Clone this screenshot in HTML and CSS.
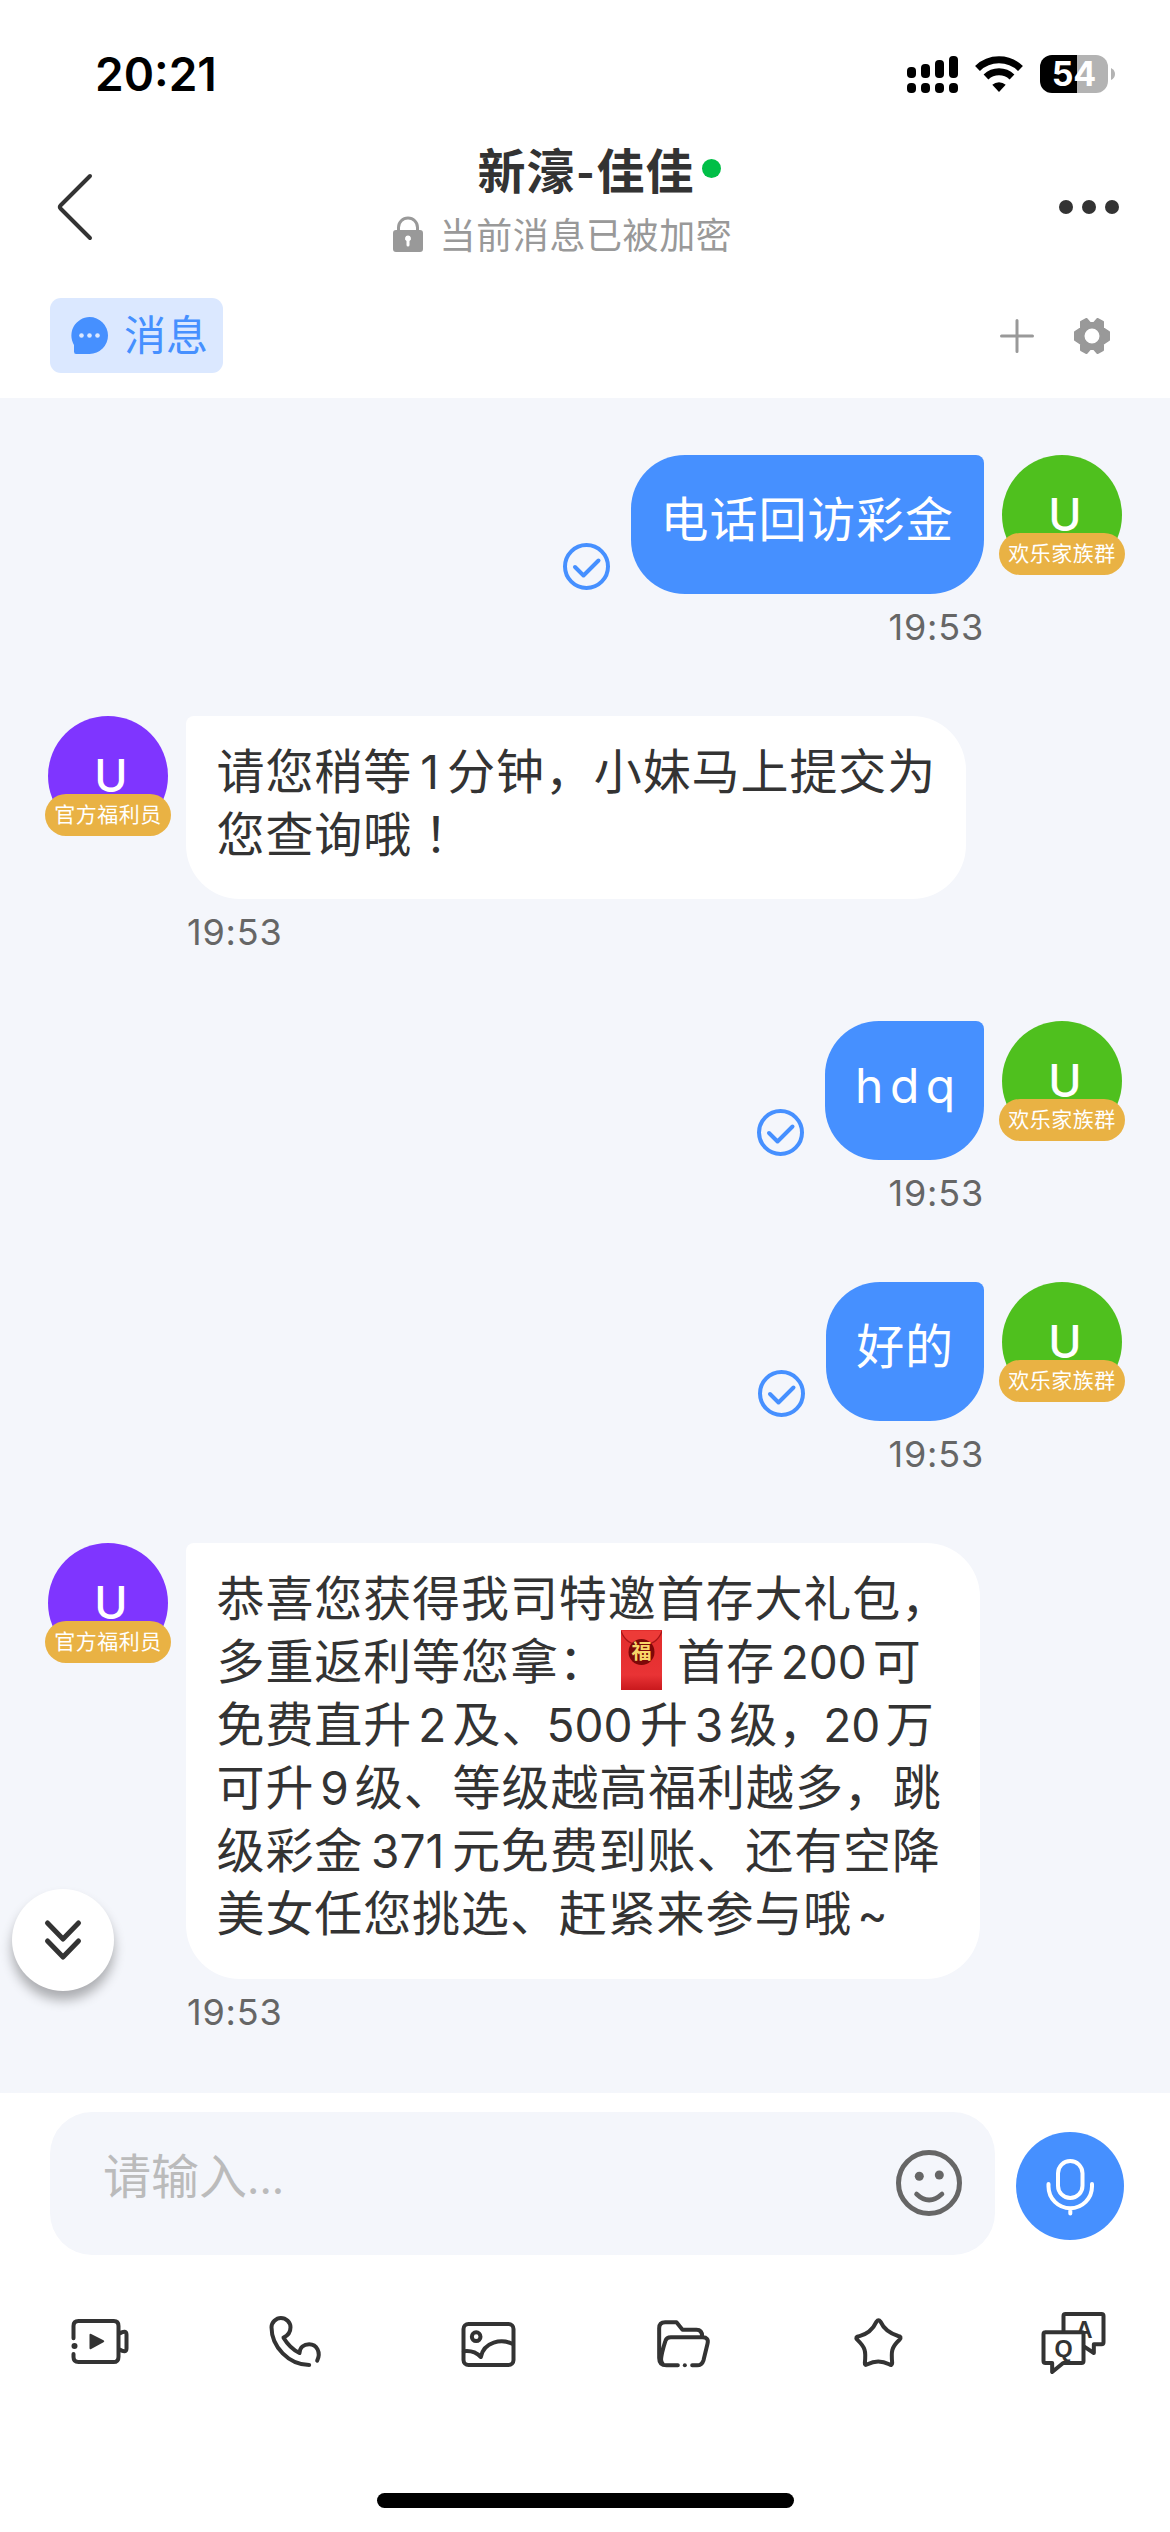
FILE: index.html
```html
<!DOCTYPE html>
<html lang="zh-CN">
<head>
<meta charset="utf-8">
<title>新濠-佳佳</title>
<link rel="stylesheet" href="styles.css">
</head>
<body>
<div class="app">
  <header class="header">
    <div class="status">
      <span class="clock">20:21</span>
      <div class="indicators">
        <svg class="signal" viewBox="0 0 51 37" width="51" height="37">
          <rect x="0" y="11" width="9" height="11" rx="4"/><rect x="14" y="8" width="9" height="14" rx="4"/><rect x="28" y="4" width="9" height="18" rx="4"/><rect x="42" y="0" width="9" height="22" rx="4"/>
          <rect x="0" y="27" width="9" height="10" rx="4"/><rect x="14" y="27" width="9" height="10" rx="4"/><rect x="28" y="27" width="9" height="10" rx="4"/><rect x="42" y="27" width="9" height="10" rx="4"/>
        </svg>
        <svg class="wifi" viewBox="0 0 48 37" width="48" height="37">
          <path d="M2.5 12.5A31 31 0 0 1 45.5 12.5" fill="none" stroke="#000" stroke-width="7"/>
          <path d="M11 21A19 19 0 0 1 37 21" fill="none" stroke="#000" stroke-width="7"/>
          <path d="M17.3 28.8A10 10 0 0 1 30.7 28.8L24 36Z"/>
        </svg>
        <div class="battery">54</div>
        <svg class="nub" viewBox="0 0 4 12" width="4" height="12"><path d="M0 0Q4 2 4 6Q4 10 0 12Z" fill="#b3b3b3"/></svg>
      </div>
    </div>
    <div class="nav">
      <svg class="back" viewBox="0 0 38 68" width="38" height="68"><path d="M34 3L4.500 32.500Q3 34 4.500 35.500L34 65" fill="none" stroke="#333" stroke-width="4" stroke-linecap="round"/></svg>
      <div class="heading">
        <div class="title">新濠<span class="hyphen">-</span>佳佳<i class="online"></i></div>
        <div class="secure">
          <svg viewBox="0 0 30 36" width="30" height="36"><path d="M5.500 16V11.500a9.500 9.500 0 0 1 19 0V16" fill="none" stroke="#999" stroke-width="3"/><path fill="#999" fill-rule="evenodd" d="M3 14H27a3 3 0 0 1 3 3V33a3 3 0 0 1-3 3H3a3 3 0 0 1-3-3V17a3 3 0 0 1 3-3ZM15 19.500a3 3 0 0 0-1.500 5.600V29a1.500 1.500 0 0 0 3 0V25.100A3 3 0 0 0 15 19.500Z"/></svg>
          <span>当前消息已被加密</span>
        </div>
      </div>
      <svg class="more" viewBox="0 0 60 14" width="60" height="14" fill="#333"><circle cx="7" cy="7" r="7"/><circle cx="30" cy="7" r="7"/><circle cx="53" cy="7" r="7"/></svg>
    </div>
    <div class="tabs">
      <div class="tab">
        <svg viewBox="0 0 37 37" width="37" height="37"><path d="M18.500 0A18.500 18.500 0 1 1 18.500 37H5Q3 37 3 34.500V28A18.500 18.500 0 0 1 18.500 0Z" fill="#4690ff"/><g fill="#dbe8ff"><circle cx="10.500" cy="18.500" r="2.300"/><circle cx="18.500" cy="18.500" r="2.300"/><circle cx="26.500" cy="18.500" r="2.300"/></g></svg>
        <span>消息</span>
      </div>
      <div class="tab-actions">
        <svg viewBox="0 0 34 34" width="34" height="34"><path d="M17 1.500V32.500M1.500 17H32.500" stroke="#999" stroke-width="3" stroke-linecap="round"/></svg>
        <svg viewBox="0 0 36 36" width="36" height="36"><path fill="#999" stroke="#999" stroke-width="2" stroke-linejoin="round" fill-rule="evenodd" d="M12.500 1L16 5H20L23.500 1L29 4V10L35 14V22L29 26V32L23.500 35L20 31H16L12.500 35L7 32V26L1 22V14L7 10V4ZM18 9.500a8.500 8.500 0 1 0 0 17a8.500 8.500 0 0 0 0-17Z"/></svg>
      </div>
    </div>
  </header>

  <main class="chat">
    <section class="row mine">
      <div class="avatar"><b>U</b><span class="role">欢乐家族群</span></div>
      <div class="body">
        <div class="line"><svg class="sent" viewBox="0 0 47 47"><circle cx="23.500" cy="23.500" r="21.500"/><path d="M12 24L20.500 32.500L35.500 17.500"/></svg><div class="bubble">电话回访彩金</div></div>
        <time>19:53</time>
      </div>
    </section>

    <section class="row">
      <div class="avatar"><b>U</b><span class="role">官方福利员</span></div>
      <div class="body">
        <div class="bubble short">请您稍等<span class="n one">1</span>分钟，小妹马上提交为<br>您查询哦<span class="tc" lang="zh-TW">！</span></div>
        <time>19:53</time>
      </div>
    </section>

    <section class="row mine">
      <div class="avatar"><b>U</b><span class="role">欢乐家族群</span></div>
      <div class="body">
        <div class="line"><svg class="sent" viewBox="0 0 47 47"><circle cx="23.500" cy="23.500" r="21.500"/><path d="M12 24L20.500 32.500L35.500 17.500"/></svg><div class="bubble latin">hdq</div></div>
        <time>19:53</time>
      </div>
    </section>

    <section class="row mine">
      <div class="avatar"><b>U</b><span class="role">欢乐家族群</span></div>
      <div class="body">
        <div class="line"><svg class="sent" viewBox="0 0 47 47"><circle cx="23.500" cy="23.500" r="21.500"/><path d="M12 24L20.500 32.500L35.500 17.500"/></svg><div class="bubble">好的</div></div>
        <time>19:53</time>
      </div>
    </section>

    <section class="row">
      <div class="avatar"><b>U</b><span class="role">官方福利员</span></div>
      <div class="body">
        <div class="bubble long">恭喜您获得我司特邀首存大礼包，<br>多重返利等您拿：<svg class="packet" viewBox="0 0 41 60"><defs><linearGradient id="red" x1="0" y1="0" x2="0" y2="1"><stop offset="0" stop-color="#e22d2c"/><stop offset=".75" stop-color="#e93335"/><stop offset="1" stop-color="#c9191d"/></linearGradient></defs><rect width="41" height="60" fill="url(#red)"/><path d="M0 1Q5 15 20.500 15Q36 15 41 1" fill="#ed3b38" stroke="#a81518" stroke-width="1.200"/><circle cx="20.500" cy="22" r="13" fill="#7d0808"/><text x="20.500" y="29" text-anchor="middle">福</text></svg>首存<span class="n three">200</span>可<br>免费直升<span class="n">2</span>及、<span class="n after">500</span>升<span class="n">3</span>级，<span class="n after two">20</span>万<br>可升<span class="n">9</span>级、等级越高福利越多，跳<br>级彩金<span class="n three tight">371</span>元免费到账、还有空降<br>美女任您挑选、赶紧来参与哦<span class="n">~</span></div>
        <time>19:53</time>
      </div>
    </section>

    <button class="to-bottom" aria-label="回到底部"><svg viewBox="0 0 42 42" width="42" height="42"><path d="M5.500 4L21 20L36.500 4M5.500 22L21 38L36.500 22"/></svg></button>
  </main>

  <footer class="composer">
    <div class="entry">
      <div class="field">
        <span>请输入<em>...</em></span>
        <svg viewBox="0 0 66 66" width="66" height="66"><circle cx="33" cy="33" r="30.500" fill="none" stroke="#666" stroke-width="5"/><circle cx="23.300" cy="26.300" r="4.500" fill="#666"/><circle cx="43.300" cy="25" r="4.500" fill="#666"/><path d="M20.500 44Q33 56 46 44" fill="none" stroke="#666" stroke-width="4.600" stroke-linecap="round"/></svg>
      </div>
      <button class="mic" aria-label="语音"><svg viewBox="0 0 108 108" width="108" height="108"><rect x="42" y="29" width="24.500" height="37" rx="12.250"/><path d="M32.500 52V54.500A21.700 21.700 0 0 0 76 54.500V52M54.300 77V81.500"/></svg></button>
    </div>
    <nav class="tools">
      <svg viewBox="37.500 0 270 330"><path d="M99 145V108Q99 93 114 93H220Q234 93 234 108V200Q234 216 219 216H114Q99 216 99 201V192M236 131Q258 118 258 134V175Q258 191 236 178"/><circle class="solid" cx="102" cy="168" r="9"/><path class="solid" d="M147 135Q147 130 152 132L189 151Q194 154.500 189 157L152 177Q147 179 147 174Z"/></svg>
      <svg viewBox="622.500 0 270 330"><path d="M806 225C745 225 693 170 693 112C693 97 707 84 721 84C737 84 750 97 750 112C750 128 740 138 729 143C741 163 757 179 777 189C778 172 790 163 806 163C829 163 842 187 830 212"/></svg>
      <svg viewBox="1207.500 0 270 330"><rect x="1269" y="102" width="150" height="123" rx="15"/><circle cx="1307" cy="140" r="13"/><path d="M1270 184Q1300 180 1321 201C1330 155 1383 145 1417 162"/></svg>
      <svg viewBox="52.500 0 270 330"><path d="M172 226H138Q116 226 116 204V115Q116 97 134 97H168L186 119H228Q245 119 245 139M121 214Q122 192 135 152Q138 142 151 142H246Q266 142 261 161L249 211Q244 226 230 226H215M127 222Q119 213 123 198"/><circle class="solid" cx="193" cy="226" r="6"/></svg>
      <svg viewBox="637.500 0 270 330"><path d="M768 95Q774 87 780 95Q794 126 833 138Q845 139 837 149C812 172 812 185 815 219Q815 228 806 223Q773 206 741 223Q732 228 733 219C737 182 734 172 710 149Q703 141 715 139Q752 130 768 95Z"/></svg>
      <svg viewBox="1222.500 0 270 330"><path d="M1329 128V78Q1329 72 1335 72H1443Q1449 72 1449 78V157Q1449 163 1443 163H1420V189L1390 169"/><text x="1391" y="144" font-size="70">A</text><path class="paper" d="M1274 127H1385Q1389 127 1389 133V213Q1389 219 1383 219H1328L1295 246V219H1275Q1269 219 1269 213V133Q1269 127 1275 127Z"/><text x="1329" y="200" font-size="70">Q</text></svg>
    </nav>
    <div class="home"></div>
  </footer>
</div>
</body>
</html>
```

FILE: styles.css
```css
* { box-sizing: border-box; }
body {
  margin: 0;
  background: #fff;
  color: #333;
  font-family: "Noto Sans CJK SC", sans-serif;
  text-autospace: no-autospace;
  text-spacing-trim: space-all;
}
svg { display: block; flex: none; }
button { border: 0; padding: 0; }
.app { width: 1170px; height: 2532px; display: flex; flex-direction: column; overflow: hidden; }

/* header */
.header { height: 398px; flex: none; background: #fff; }
.status { height: 130px; padding: 18px 55px 0 95px; display: flex; align-items: center; justify-content: space-between; }
.clock { font: 600 46px/1 Inter, sans-serif; color: #000; }
.indicators { display: flex; align-items: center; }
.wifi { margin: 0 17px; }
.battery {
  width: 68px; height: 38px; border-radius: 12px;
  background: linear-gradient(90deg, #000 54%, #b3b3b3 54%);
  color: #fff; font: 700 34px/38px Inter, sans-serif; text-align: center;
}
.nub { margin-left: 3px; }
.nav { height: 150px; padding: 0 51px 0 56px; display: grid; grid-template-columns: 60px 1fr 60px; }
.back { margin-top: 43px; }
.more { margin-top: 70px; }
.heading { display: flex; flex-direction: column; align-items: center; }
.title { display: flex; align-items: center; height: 76px; font-size: 48px; font-weight: 700; line-height: 74px; letter-spacing: 1px; padding-left: 23px; }
.hyphen { width: 21px; text-align: center; }
.online { width: 19px; height: 19px; border-radius: 50%; background: #00bf47; margin-left: 7px; }
.secure { display: flex; align-items: center; gap: 17px; height: 56px; font-size: 36px; line-height: 52px; letter-spacing: .6px; color: #999; margin-right: 50px; }
.secure span { margin-top: -3px; }
.tabs { padding: 18px 60px 0 50px; display: flex; justify-content: space-between; align-items: center; }
.tab { height: 75px; width: 173px; padding-left: 21px; border-radius: 11px; background: #dbe8ff; color: #4690ff; display: flex; align-items: center; gap: 16px; font-size: 42px; line-height: 68px; }
.tab span { margin-top: -6px; }
.tab-actions { display: flex; align-items: center; gap: 40px; }

/* conversation */
.chat { height: 1695px; flex: none; background: #f4f6fb; padding: 57px 45px 0 48px; display: flex; flex-direction: column; gap: 67px; position: relative; }
.row { display: flex; gap: 18px; }
.mine { flex-direction: row-reverse; padding-right: 3px; }
.avatar { width: 120px; height: 120px; flex: none; border-radius: 50%; background: #7f35ff; position: relative; color: #fff; text-align: center; }
.avatar b { display: block; font: 500 45px/120px Inter, sans-serif; padding-left: 6px; }
.mine .avatar { background: #4fc01e; }
.role { position: absolute; left: -3px; bottom: 0; width: 126px; height: 42px; border-radius: 21px; background: #e9b244; font-size: 21px; line-height: 39px; letter-spacing: .5px; white-space: nowrap; }
.body { display: flex; flex-direction: column; align-items: flex-start; }
.mine .body { align-items: flex-end; }
.line { display: flex; align-items: flex-end; gap: 21px; }
.sent { width: 47px; height: 47px; margin-bottom: 4px; fill: none; stroke: #4690ff; stroke-width: 4; stroke-linecap: round; stroke-linejoin: round; }
.bubble { background: #fff; border-radius: 8px 54px 54px 54px; padding: 21px 0 36px 30.5px; font-size: 48px; line-height: 63px; letter-spacing: .9px; white-space: nowrap; }
.short { width: 780px; height: 183px; }
.long { width: 794px; height: 436px; }
.mine .bubble { background: #4690ff; color: #fff; border-radius: 54px 8px 54px 54px; height: 139px; padding: 30px 30px 0; }
.mine .latin { width: 159px; font-family: Inter, sans-serif; font-size: 48px; letter-spacing: 6.5px; padding: 33px 0 0 30px; }
time { font: 400 36px/42px Inter, sans-serif; color: #666; margin: 12px 0 1px 1px; letter-spacing: .8px; }
.n { display: inline-block; width: 40.5px; font: 400 46px/1 Inter, sans-serif; letter-spacing: 0; text-align: center; }
.one { width: 35px; }
.three { width: 98px; }
.tight { width: 88.7px; }
.after { width: 93.500px; margin-left: -4px; text-align: left; }
.two { width: 62.700px; }
.tc { font-family: "Noto Sans CJK TC", sans-serif; }
.packet { display: inline-block; width: 41px; height: 60px; margin: -10px 15.300px -10px 13px; vertical-align: -1px; }
.packet text { font: 700 20px "Noto Sans CJK SC", sans-serif; letter-spacing: 0; fill: #f8d568; }
.to-bottom { position: absolute; left: 12px; top: 1491px; width: 102px; height: 102px; border-radius: 50%; background: #fff; box-shadow: 0 9px 12px rgba(0, 0, 0, .3); display: flex; align-items: center; justify-content: center; }
.to-bottom svg { fill: none; stroke: #333; stroke-width: 5; stroke-linecap: round; stroke-linejoin: round; }

/* composer */
.composer { flex: 1; background: #fff; padding-top: 19px; display: flex; flex-direction: column; }
.entry { display: flex; align-items: center; padding-left: 50px; gap: 21px; }
.field { width: 945px; height: 143px; border-radius: 42px; background: #f4f6fb; display: flex; justify-content: space-between; align-items: center; padding: 0 33px 0 53px; }
.field span { color: #bbb; font-size: 48px; line-height: 63px; margin-top: -20px; }
.field svg { margin-top: -1px; }
.field em { font: 400 43px/1 Inter, sans-serif; }
.mic { width: 108px; height: 108px; border-radius: 50%; background: #4690ff; margin-top: 5px; }
.mic svg { fill: none; stroke: #fff; stroke-width: 4; stroke-linecap: round; }
.tools { display: grid; grid-template-columns: repeat(6, 195px); justify-items: center; margin-top: 35px; }
.tools svg { width: 90px; height: 110px; fill: none; stroke: #333; stroke-width: 12; stroke-linecap: round; stroke-linejoin: round; }
.tools .solid { fill: #333; stroke: none; }
.tools .paper { fill: #fff; }
.tools text { fill: #333; stroke: none; font-family: "Liberation Sans", sans-serif; font-weight: 700; text-anchor: middle; }
.home { width: 417px; height: 15px; border-radius: 8px; background: #000; margin: 93px auto 0; }
```
